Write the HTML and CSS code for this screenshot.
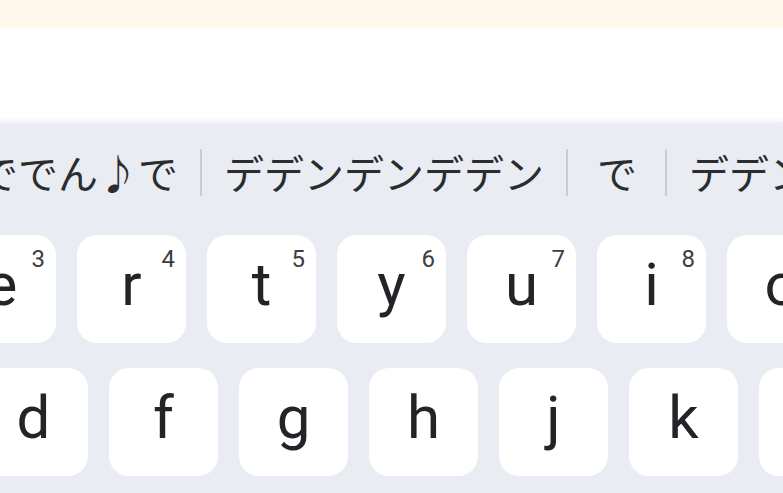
FILE: index.html
```html
<!DOCTYPE html>
<html lang="ja">
<head>
<meta charset="utf-8">
<title>Keyboard</title>
<link rel="stylesheet" href="styles.css">
</head>
<body>
<div class="screen">
  <div class="top-band"></div>
  <div class="input-area"></div>
  <div class="keyboard">
    <div class="candidates">
      <div class="cand cand-first">ででん♪で</div>
      <div class="sep"></div>
      <div class="cand">デデンデンデデン</div>
      <div class="sep"></div>
      <div class="cand cand-wide">で</div>
      <div class="sep"></div>
      <div class="cand">デデン</div>
    </div>
    <div class="rows">
      <div class="row row-1">
        <div class="key"><span class="letter">e</span><span class="num">3</span></div>
        <div class="key"><span class="letter">r</span><span class="num">4</span></div>
        <div class="key"><span class="letter">t</span><span class="num">5</span></div>
        <div class="key"><span class="letter">y</span><span class="num">6</span></div>
        <div class="key"><span class="letter">u</span><span class="num">7</span></div>
        <div class="key"><span class="letter">i</span><span class="num">8</span></div>
        <div class="key"><span class="letter">o</span><span class="num">9</span></div>
      </div>
      <div class="row row-2">
        <div class="key"><span class="letter">d</span></div>
        <div class="key"><span class="letter">f</span></div>
        <div class="key"><span class="letter">g</span></div>
        <div class="key"><span class="letter">h</span></div>
        <div class="key"><span class="letter">j</span></div>
        <div class="key"><span class="letter">k</span></div>
        <div class="key"><span class="letter">l</span></div>
      </div>
    </div>
  </div>
</div>
</body>
</html>
```

FILE: styles.css
```css
html, body {
  margin: 0;
  padding: 0;
  background: #ffffff;
}

.screen {
  width: 783px;
  height: 493px;
  overflow: hidden;
  display: flex;
  flex-direction: column;
  font-family: Roboto, "Noto Sans", sans-serif;
}

.top-band {
  height: 30px;
  flex: none;
  background: linear-gradient(to bottom, #fff8eb 0, #fff8eb 26px, #ffffff 30px);
}

.input-area {
  height: 92px;
  flex: none;
  background: linear-gradient(to bottom, #ffffff 0, #ffffff 87px, #f3f5f8 92px);
}

.keyboard {
  flex: 1;
  background: linear-gradient(to bottom, #eef0f5 0, #e9ecf2 4px);
  display: flex;
  flex-direction: column;
}

.candidates {
  height: 100px;
  flex: none;
  display: flex;
  align-items: center;
  white-space: nowrap;
  font-family: "Noto Sans CJK JP", "Noto Sans", sans-serif;
  font-size: 40px;
  line-height: 40px;
  color: #2b2c2e;
}

.cand {
  flex: none;
  padding: 0 22px;
}

.cand-first {
  margin-left: -44px;
}

.cand-wide {
  padding: 0 28px 0 29px;
}

.sep {
  flex: none;
  width: 2px;
  height: 47px;
  background: #c9ccd3;
}

.rows {
  display: flex;
  flex-direction: column;
  gap: 25px;
  padding-top: 13px;
}

.row {
  display: flex;
  gap: 21px;
}

.row-1 {
  margin-left: -53px;
}

.row-2 {
  margin-left: -21px;
}

.key {
  position: relative;
  flex: none;
  width: 109px;
  height: 108px;
  border-radius: 20px;
  background: #ffffff;
  display: flex;
  align-items: center;
  justify-content: center;
  padding-bottom: 9px;
  box-sizing: border-box;
}

.letter {
  font-size: 60px;
  line-height: 60px;
  color: #232427;
}

.num {
  position: absolute;
  top: 12px;
  right: 11px;
  font-size: 24px;
  line-height: 24px;
  color: #3c3d40;
}
```
